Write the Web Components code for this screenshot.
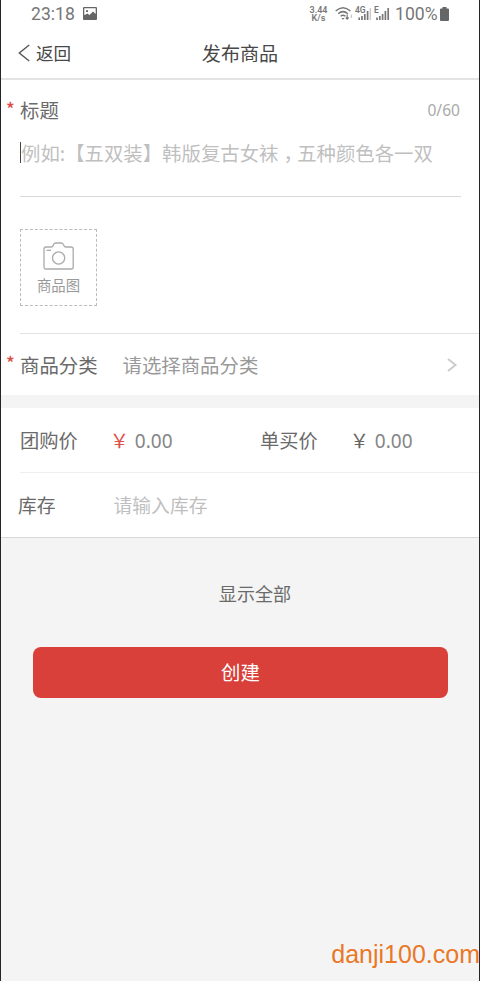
<!DOCTYPE html>
<html lang="zh-CN">
<head>
<meta charset="utf-8">
<title>发布商品</title>
<style>
html,body{margin:0;height:100%}
body{font-family:"Noto Sans CJK SC",sans-serif;color:#6a6a6a;background:#f4f4f4;overflow:hidden}
</style>
</head>
<body>
<publish-page></publish-page>
<script>
const define = (name, css, html) => customElements.define(name, class extends HTMLElement {
  constructor() {
    super();
    this.attachShadow({ mode: 'open' }).innerHTML = `<style>*{box-sizing:border-box}svg{display:block;flex:none}${css}</style>${html}`;
  }
});

define('status-bar', `
:host{display:flex;height:27px;align-items:center;padding:0 29px 0 30px;font-family:Roboto,sans-serif;color:#777;white-space:nowrap}
.time{font-size:17.6px;line-height:28px;margin-right:8px}
.speed{margin-left:auto;width:19px;text-align:center;margin-right:7px}
.speed span{display:block;font-size:9px;line-height:8px;font-weight:600}
.pct{font-size:17.6px;line-height:28px;margin-left:5px;width:42px}
`, `
<span class="time">23:18</span>
<svg width="14" height="13" viewBox="0 0 14 13"><path fill="#666" fill-rule="evenodd" d="M1 0H13Q14 0 14 1V12Q14 13 13 13H1Q0 13 0 12V1Q0 0 1 0ZM1.3 1.3V8.2L4.3 6.5L6.5 8L10 4.6L12.7 7V1.3ZM3 3.2H5V5H3Z"/></svg>
<div class="speed"><span>3.44</span><span>K/s</span></div>
<svg width="18" height="15" viewBox="0 0 18 15" fill="none" stroke="#777" stroke-width="1.5"><path d="M.7 5Q8-1.6 15.4 5M3.2 7.8Q8 3.4 12.8 7.8M5.6 10.3Q8 8.2 10.4 10.3"/><path d="M6.3 12L8 13.7L9.7 12Z" fill="#777" stroke="none"/><path d="M12.2 8.5V13M10.8 11.5L12.2 13L13.6 11.5" stroke-width="1.2"/><path d="M16.3 12V8.5" stroke="#bbb" stroke-width="1"/></svg>
<svg width="19" height="15" viewBox="0 0 19 15" style="margin-left:2px"><text x="0" y="7" font-size="8.5" font-weight="600" fill="#777">4G</text><path stroke="#777" stroke-width="1.7" d="M4.2 14V11.5M7 14V10M9.8 14V8M12.6 14V5"/><path stroke="#ccc" stroke-width="1.5" d="M15.3 14V2"/></svg>
<svg width="16" height="15" viewBox="0 0 16 15"><text x="0" y="7" font-size="8.5" font-weight="600" fill="#777">E</text><path stroke="#777" stroke-width="1.7" d="M3 14V11.5M5.8 14V10M8.6 14V8M11.4 14V5M14.2 14V2"/></svg>
<span class="pct">100%</span>
<svg width="9" height="14" viewBox="0 0 9 14" style="margin:0 1px 0 3px"><path fill="#666" d="M2.5 0H6.5V1.5H8Q9 1.5 9 2.5V13Q9 14 8 14H1Q0 14 0 13V2.5Q0 1.5 1 1.5H2.5Z"/></svg>
`);

define('nav-bar', `
:host{display:grid;grid-template-columns:1fr auto 1fr;align-items:center;height:53px;border-bottom:2px solid #e3e3e3;padding:0 17px;color:#484848}
.back{display:flex;align-items:center;gap:6px;font-size:17.6px;line-height:50px}
.title{font-size:19.1px;line-height:50px}
`, `
<div class="back"><svg width="12" height="18" viewBox="0 0 12 18" fill="none" stroke="#555" stroke-width="1.4"><path d="M11.2 1L1.3 9L11.2 17"/></svg><slot name="back"></slot></div>
<div class="title"><slot></slot></div>`);

define('required-mark', `
:host{display:block;width:19px;padding:0 0 5px 5px;font:500 18px/20px "Noto Sans CJK SC",sans-serif;color:#dd4a44}
`, `*`);

define('title-field', `
:host{display:block;height:117px}
.head{display:flex;height:60px;align-items:center;font-size:19.4px;line-height:28px;padding-right:19px}
.label{padding-bottom:1px}
.count{margin-left:auto;font:15.6px/24px "Noto Sans",sans-serif;color:#aaa}
.input{display:flex;align-items:center;height:25px;margin:0 18px 0 19px;font-size:19.4px;line-height:25px;color:#bfbfbf;white-space:nowrap}
.caret{width:1px;height:21px;background:#444;flex:none}
.comma{margin:0 4px 0 5px;font-feature-settings:"halt"}
.line{height:1px;background:#d6dada;margin:31px 18px 0 19px}
`, `
<div class="head"><required-mark></required-mark><span class="label">标题</span><span class="count">0/60</span></div>
<div class="input"><i class="caret"></i><span>例如:【五双装】韩版复古女袜</span><span class="comma">，</span><span>五种颜色各一双</span></div>
<div class="line"></div>`);

define('photo-picker', `
:host{display:block;height:136px;padding:32px 0 0 19px}
.box{width:77px;height:77px;border:1px dashed #bbb;display:flex;flex-direction:column;align-items:center;padding-top:12px;font-size:14.4px;line-height:22px;color:#999}
svg{margin-bottom:4px}
`, `<div class="box"><svg width="31" height="28" viewBox="0 0 31 28" fill="none" stroke="#aaa" stroke-width="1.3"><path d="M3 5H8Q9.7 5 10.2 3.5L10.7 2.3Q11.3 1 12.8 1H18.3Q19.6 1 20.2 2.3L20.8 3.5Q21.4 5 23 5H28Q30.2 5 30.2 7V25Q30.2 27 28.2 27H3Q1 27 1 25V7Q1 5 3 5Z"/><circle cx="15.6" cy="16" r="6.1"/><path d="M3.5 8.3H8"/></svg><span><slot></slot></span></div>`);

define('category-row', `
:host{display:block}
.line{height:1px;background:#e3e3e3;margin-left:19px}
.row{display:flex;align-items:center;height:61px;font-size:19.4px;padding-right:21px}
.value{margin-left:25px;color:#999}
svg{margin-left:auto}
`, `<div class="line"></div><div class="row"><required-mark></required-mark><slot></slot><span class="value"><slot name="value"></slot></span>
<svg width="12" height="14" viewBox="0 0 12 14" fill="none" stroke="#ccc" stroke-width="2"><path d="M2 1L9.5 7L2 13"/></svg></div>`);

define('price-cell', `
:host{display:flex;flex:none;align-items:center;width:240px;font-size:19.3px;line-height:30px}
:host(:last-child){width:219px}
.yen{margin-left:30px;width:23px;text-align:center;color:var(--yen,#666)}
.num{margin-left:4px;padding-top:1px;font:19px/30px "Noto Sans",sans-serif;color:#858585}
`, `<slot></slot><span class="yen">￥</span><span class="num">0.00</span>`);

define('price-row', `
:host{display:flex;height:65px;margin-left:19px;border-bottom:1px solid #eee}
`, `<slot></slot>`);

define('stock-row', `
:host{display:flex;align-items:center;height:65px;padding:0 0 1px 17px;border-bottom:1px solid #d8d8d8;font-size:18.8px}
.hint{margin-left:58px;color:#bfbfbf}
`, `<slot></slot><span class="hint"><slot name="hint"></slot></span>`);

define('primary-button', `
:host{display:flex;align-items:center;justify-content:center;height:51px;margin:0 31px 0 32px;border-radius:8px;background:#d9403a;color:#fff;font-size:19.4px;line-height:48px;padding-bottom:2px;box-sizing:border-box}
`, `<slot></slot>`);

define('publish-page', `
:host{display:flex;flex-direction:column;height:981px;border-left:1px solid #252525;border-right:1px solid #252525;box-sizing:border-box;position:relative;background:#f4f4f4}
.panel{background:#fff}
.gap{height:13px}
.all{height:109px;display:flex;align-items:center;justify-content:center;padding-left:30px;font-size:18.1px}
.mark{position:absolute;right:-1px;bottom:11px;font:25px/32px "Liberation Sans",Arial,sans-serif;color:#e97828}
`, `
<div class="panel"><status-bar></status-bar>
<nav-bar><span slot="back">返回</span>发布商品</nav-bar>
<title-field></title-field>
<photo-picker>商品图</photo-picker>
<category-row>商品分类<span slot="value">请选择商品分类</span></category-row></div>
<div class="gap"></div>
<div class="panel"><price-row><price-cell style="--yen:#dd514c">团购价</price-cell><price-cell>单买价</price-cell></price-row>
<stock-row>库存<span slot="hint">请输入库存</span></stock-row></div>
<div class="all">显示全部</div>
<primary-button>创建</primary-button>
<div class="mark">danji100.com</div>`);
</script>
</body>
</html>
